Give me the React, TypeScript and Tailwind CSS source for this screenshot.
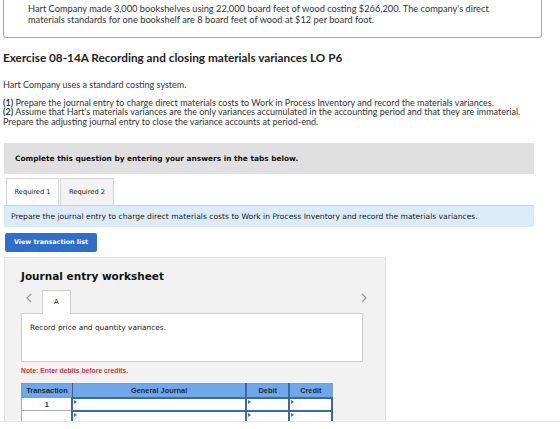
import React from "react";

const sans = { fontFamily: "Lato, 'Open Sans', Arial, sans-serif" };
const verdana = { fontFamily: "'DejaVu Sans', Verdana, sans-serif" };
const arial = { fontFamily: "'Liberation Sans', Arial, sans-serif" };

function Cell() {
  return (
    <td className="relative border-2 border-[#3b66a8] bg-white p-0">
      <span className="absolute left-[1px] top-[1px] h-0 w-0 border-y-[2px] border-l-[3px] border-y-transparent border-l-[#2f6fd0]" />
    </td>
  );
}

function Chevron({ dir }: { dir: "left" | "right" }) {
  return (
    <svg width="6" height="10" viewBox="0 0 6 10" fill="none">
      <polyline
        points={dir === "left" ? "5,1 1,5 5,9" : "1,1 5,5 1,9"}
        stroke="#9a9a9a"
        strokeWidth="1.2"
      />
    </svg>
  );
}

export default function App() {
  return (
    <div className="relative h-[429px] w-[560px] overflow-hidden bg-white text-[#222]">
      {/* problem statement */}
      <div
        className="ml-[3px] mt-[-4px] h-[42px] w-[539px] rounded-b-[3px] border border-[#8ea6c8] pl-[24px] pt-[6px] text-[9.25px] leading-[11px] text-[#333]"
        style={sans}
      >
        <p>
          Hart Company made 3,000 bookshelves using 22,000 board feet of wood costing $266,200. The company's direct
        </p>
        <p>materials standards for one bookshelf are 8 board feet of wood at $12 per board foot.</p>
      </div>

      <h1 className="ml-[3px] mt-[12px] text-[11.75px] font-bold leading-[15px] text-[#222]" style={sans}>
        Exercise 08-14A Recording and closing materials variances LO P6
      </h1>

      <div className="ml-[3px] mt-[15px] text-[9px] leading-[9.4px] text-[#333]" style={sans}>
        <p>Hart Company uses a standard costing system.</p>
        <p className="mt-[8.6px]">
          <b>(1)</b> Prepare the journal entry to charge direct materials costs to Work in Process Inventory and record the materials variances.
        </p>
        <p>
          <b>(2)</b> Assume that Hart's materials variances are the only variances accumulated in the accounting period and that they are immaterial.
        </p>
        <p>Prepare the adjusting journal entry to close the variance accounts at period-end.</p>
      </div>

      {/* instructions banner */}
      <div
        className="ml-[4px] mt-[17px] flex h-[31px] w-[530px] items-center bg-[#e0e0e0] pl-[11px] text-[7.4px] font-bold text-[#111]"
        style={verdana}
      >
        Complete this question by entering your answers in the tabs below.
      </div>

      {/* tabs */}
      <div className="ml-[6px] mt-[4px] flex items-end gap-[1px]" style={verdana}>
        <div className="flex h-[27px] w-[53px] items-center justify-center border border-b-0 border-[#d4d4d4] bg-white text-[6.7px] text-[#222]">
          Required 1
        </div>
        <div className="flex h-[27px] w-[54px] items-center justify-center border border-b-0 border-[#d4d4d4] bg-[#f3f3f3] text-[6.7px] text-[#222]">
          Required 2
        </div>
      </div>
      <div
        className="ml-[4px] flex h-[22px] w-[530px] items-center border-t border-[#d0d0d0] bg-[#dcebf8] pl-[7px] text-[7.6px] text-[#222]"
        style={verdana}
      >
        Prepare the journal entry to charge direct materials costs to Work in Process Inventory and record the materials variances.
      </div>

      <button
        className="ml-[5px] mt-[6px] flex h-[19px] w-[92px] items-center justify-center rounded-[2px] bg-[#2f6fca] text-[6.4px] font-bold text-white"
        style={verdana}
      >
        View transaction list
      </button>

      {/* worksheet */}
      <div className="ml-[4px] mt-[5px] h-[170px] w-[382px] border border-[#e2e2e2] bg-[#f2f2f2] pl-[16px] pt-[11px]">
        <h2 className="text-[10.5px] font-bold leading-[14px] text-[#111]" style={verdana}>
          Journal entry worksheet
        </h2>
        <div className="mt-[7px] flex h-[23px] w-[346px] items-end">
          <span className="mb-[10px] ml-[5px] w-[16px]">
            <Chevron dir="left" />
          </span>
          <div
            className="z-10 -mb-px flex h-[24px] w-[29px] items-center justify-center border border-b-0 border-[#cfcfcf] bg-white text-[7px] text-[#111]"
            style={verdana}
          >
            A
          </div>
          <span className="mb-[10px] ml-auto">
            <Chevron dir="right" />
          </span>
        </div>
        <div
          className="h-[49px] w-[342px] border border-[#cfcfcf] bg-white pl-[8px] pt-[8px] text-[7.4px] text-[#222]"
          style={verdana}
        >
          Record price and quantity variances.
        </div>
        <p className="mt-[5px] text-[6.8px] font-bold leading-[8px] text-[#d9343a]" style={arial}>
          Note: Enter debits before credits.
        </p>
        <table className="mt-[8px] w-[312px] border-collapse" style={arial}>
          <thead>
            <tr className="h-[14px] bg-[#6fa8e8] text-[7.4px] text-[#1c2a3d]">
              <th className="w-[51px] border border-[#8a9bb0] border-r-[#4a5f7e] font-bold">Transaction</th>
              <th className="w-[175px] border border-[#8a9bb0] border-r-2 border-r-[#3b66a8] font-bold">General Journal</th>
              <th className="w-[43px] border border-[#8a9bb0] border-r-2 border-r-[#3b66a8] font-bold">Debit</th>
              <th className="w-[43px] border border-[#8a9bb0] font-bold">Credit</th>
            </tr>
          </thead>
          <tbody>
            <tr className="h-[13px]">
              <td className="border border-[#aaa] bg-white text-center text-[7.4px] font-bold text-[#333]">1</td>
              <Cell />
              <Cell />
              <Cell />
            </tr>
            <tr className="h-[13px]">
              <td className="border border-[#aaa] bg-white" />
              <Cell />
              <Cell />
              <Cell />
            </tr>
          </tbody>
        </table>
      </div>

      {/* page footer strip */}
      <div className="absolute bottom-0 left-0 h-[8px] w-full border-t border-[#e8e8e8] bg-white" />
    </div>
  );
}
